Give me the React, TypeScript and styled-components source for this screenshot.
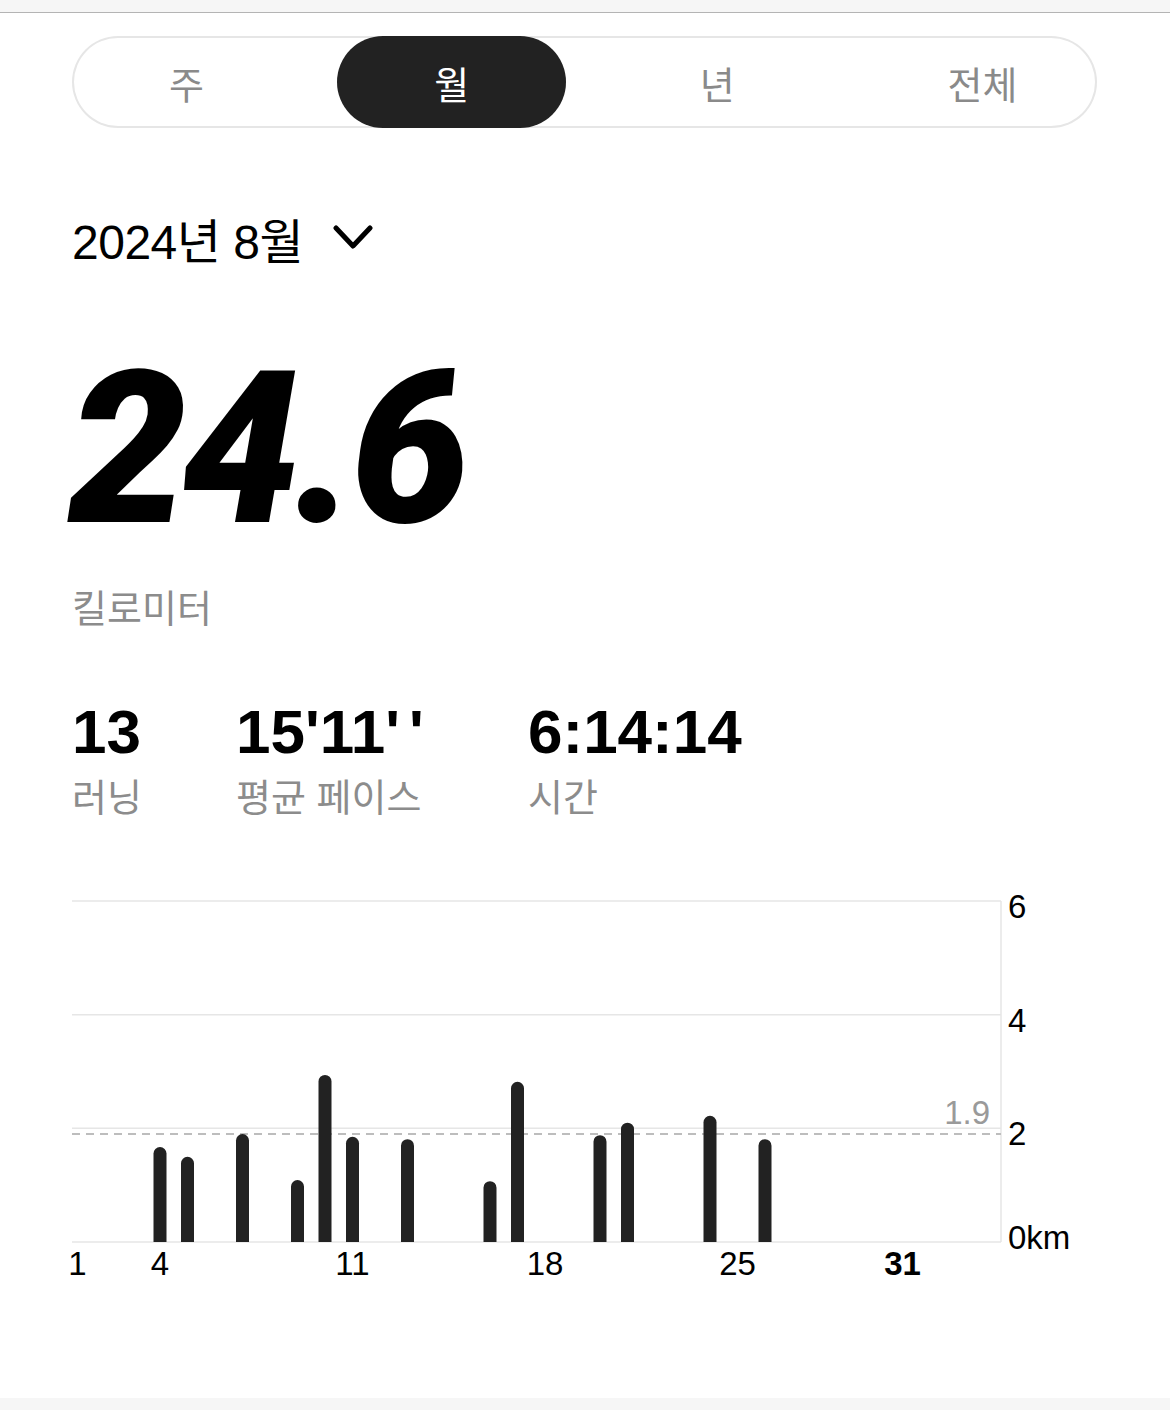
import React from "react"
import styled, { createGlobalStyle } from "styled-components"

const GlobalStyle = createGlobalStyle`
  html, body {
    margin: 0;
    padding: 0;
    background: #fff;
    font-family: "Liberation Sans", "Noto Sans CJK KR", sans-serif;
    color: #000;
  }
`

const Page = styled.div`
  width: 1170px;
  min-height: 1410px;
  display: flex;
  flex-direction: column;
`

const TopStrip = styled.div`
  height: 12px;
  background: #f6f6f6;
  border-bottom: 1px solid #b4b4b4;
`

const Content = styled.main`
  flex: 1;
  padding: 23px 73px 0 72px;
  display: flex;
  flex-direction: column;
`

const BottomStrip = styled.div`
  height: 12px;
  background: #f6f6f6;
`

const Tabs = styled.div`
  height: 92px;
  border-radius: 46px;
  box-shadow: inset 0 0 0 2px #e6e6e6;
  display: flex;
  justify-content: space-between;
`

const Tab = styled.button<{ $active?: boolean }>`
  width: 229px;
  height: 92px;
  border: 0;
  border-radius: 46px;
  padding: 0;
  background: ${(p) => (p.$active ? "#222" : "transparent")};
  color: ${(p) => (p.$active ? "#fff" : "#8a8a8a")};
  font-family: inherit;
  font-size: 38px;
  cursor: pointer;
`

const PeriodRow = styled.div`
  margin-top: 86px;
  display: flex;
  align-items: center;
  gap: 30px;
  height: 48px;
`

const Period = styled.span`
  font-size: 48px;
  letter-spacing: -0.5px;
`

const BigNumber = styled.div`
  margin-top: 82px;
  font-family: Roboto, "Liberation Sans", sans-serif;
  font-weight: 900;
  font-style: italic;
  font-size: 212px;
  line-height: 1;
  letter-spacing: -6px;
  margin-left: -4px;
`

const Unit = styled.div`
  margin-top: 22px;
  font-size: 38px;
  color: #8c8c8c;
`

const Stats = styled.div`
  margin-top: 68px;
  display: flex;
`

const Stat = styled.div<{ $w: number }>`
  width: ${(p) => p.$w}px;
  display: flex;
  flex-direction: column;
`

const StatValue = styled.div`
  font-size: 62px;
  font-weight: 700;
  line-height: 1;
`

const Seconds = styled.span`
  letter-spacing: 9px;
`

const StatLabel = styled.div`
  margin-top: 16px;
  font-size: 38px;
  color: #8c8c8c;
  line-height: 1;
`

const ChartBox = styled.div`
  margin-top: 64px;
  height: 420px;

  svg {
    overflow: visible;
  }
`

const days: Record<number, number> = {
  4: 1.67,
  5: 1.5,
  7: 1.9,
  9: 1.09,
  10: 2.94,
  11: 1.85,
  13: 1.81,
  16: 1.07,
  17: 2.82,
  20: 1.88,
  21: 2.1,
  24: 2.22,
  26: 1.81,
}

const PLOT_W = 929
const TOP = 20
const BASE = 361
const perKm = (BASE - TOP) / 6
const dayX = (d: number) => 5.5 + (d - 1) * 27.5
const yOf = (v: number) => BASE - v * perKm

function Chart() {
  const avg = 1.9
  const barW = 13
  return (
    <svg width="1030" height="420" viewBox="0 0 1030 420">
      {[6, 4, 2, 0].map((v) => (
        <line key={v} x1={0} x2={PLOT_W} y1={yOf(v)} y2={yOf(v)} stroke="#e6e6e6" strokeWidth={1.5} />
      ))}
      <line x1={PLOT_W} x2={PLOT_W} y1={TOP} y2={BASE} stroke="#e6e6e6" strokeWidth={1.5} />
      <line
        x1={0}
        x2={PLOT_W}
        y1={yOf(avg)}
        y2={yOf(avg)}
        stroke="#bdbdbd"
        strokeWidth={2}
        strokeDasharray="8 6"
      />
      {Object.entries(days).map(([d, v]) => {
        const x = dayX(Number(d)) - barW / 2
        const top = yOf(v)
        const r = barW / 2
        return (
          <path
            key={d}
            d={`M${x} ${BASE} V${top + r} A${r} ${r} 0 0 1 ${x + barW} ${top + r} V${BASE} Z`}
            fill="#222"
          />
        )
      })}
      <g fontFamily="Liberation Sans, sans-serif" fontSize="33" fill="#000">
        {[6, 4, 2].map((v) => (
          <text key={v} x={936} y={yOf(v) + 17}>
            {v}
          </text>
        ))}
        <text x={936} y={BASE + 7}>0km</text>
        <text x={918} y={yOf(avg) - 10} fill="#9a9a9a" textAnchor="end">
          1.9
        </text>
        {[1, 4, 11, 18, 25].map((d) => (
          <text key={d} x={dayX(d)} y={BASE + 33} textAnchor="middle">
            {d}
          </text>
        ))}
        <text x={dayX(31)} y={BASE + 33} textAnchor="middle" fontWeight="700">
          31
        </text>
      </g>
    </svg>
  )
}

function Chevron() {
  return (
    <svg width="40" height="28" viewBox="0 0 40 28">
      <path d="M3 4 L20 22 L37 4" fill="none" stroke="#000" strokeWidth="5" strokeLinecap="round" strokeLinejoin="round" />
    </svg>
  )
}

export default function App() {
  const tabs = ["주", "월", "년", "전체"]
  return (
    <>
      <GlobalStyle />
      <Page>
        <TopStrip />
        <Content>
          <Tabs>
            {tabs.map((t) => (
              <Tab key={t} $active={t === "월"}>
                {t}
              </Tab>
            ))}
          </Tabs>
          <PeriodRow>
            <Period>2024년 8월</Period>
            <Chevron />
          </PeriodRow>
          <BigNumber>24.6</BigNumber>
          <Unit>킬로미터</Unit>
          <Stats>
            <Stat $w={164}>
              <StatValue>13</StatValue>
              <StatLabel>러닝</StatLabel>
            </Stat>
            <Stat $w={292}>
              <StatValue>
                15'11<Seconds>''</Seconds>
              </StatValue>
              <StatLabel>평균 페이스</StatLabel>
            </Stat>
            <Stat $w={300}>
              <StatValue>6:14:14</StatValue>
              <StatLabel>시간</StatLabel>
            </Stat>
          </Stats>
          <ChartBox>
            <Chart />
          </ChartBox>
        </Content>
        <BottomStrip />
      </Page>
    </>
  )
}
